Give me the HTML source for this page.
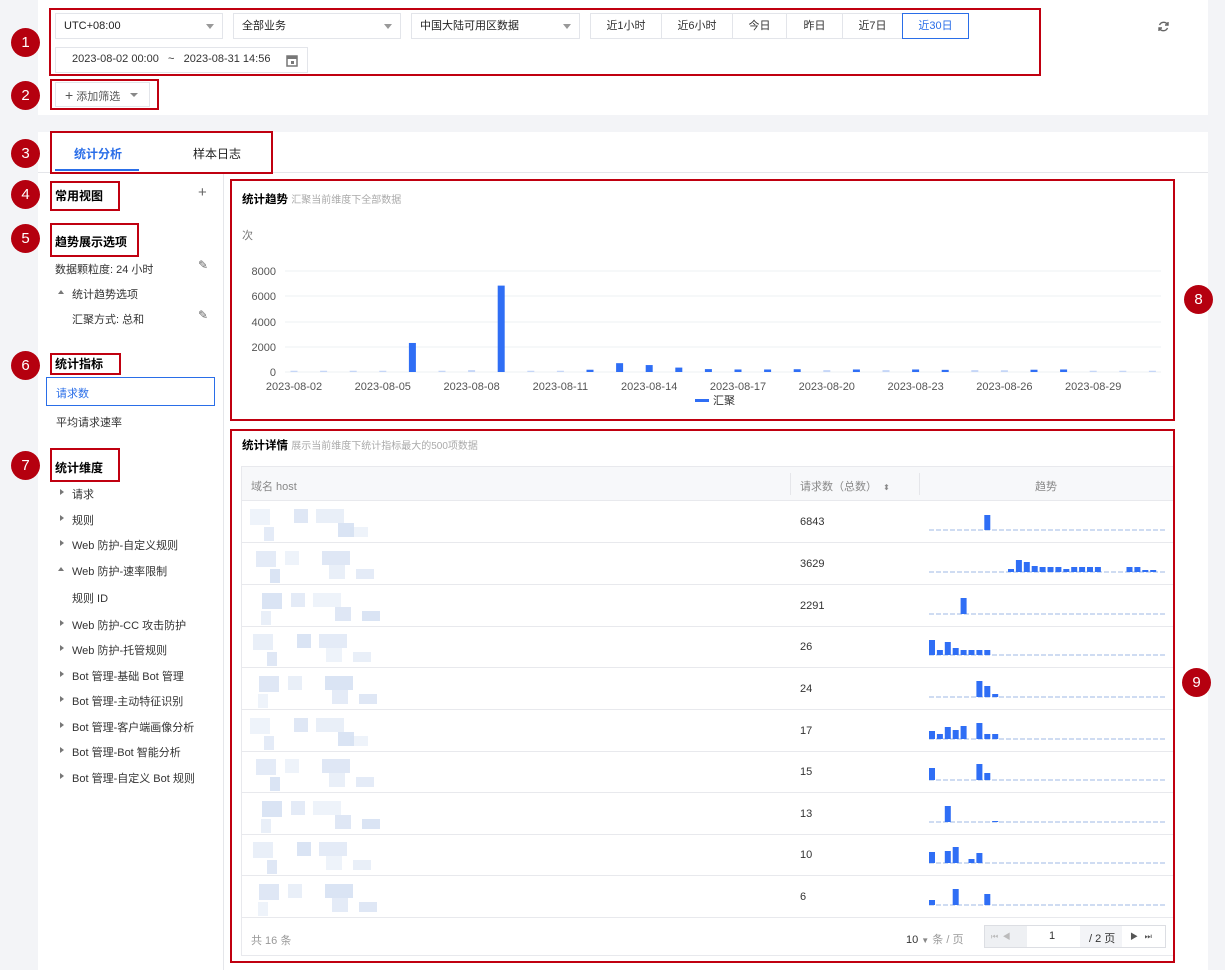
<!DOCTYPE html>
<html><head><meta charset="utf-8"><style>
*{box-sizing:border-box;margin:0;padding:0}
body{width:1225px;height:970px;background:#f3f4f7;font-family:"Liberation Sans","Noto Sans CJK SC",sans-serif;font-size:11px;color:#333;position:relative;overflow:hidden}
.a{position:absolute}
.card{position:absolute;background:#fff}
.sel{position:absolute;border:1px solid #e3e5ea;height:26px;line-height:24px;padding-left:8px;font-size:11px;color:#222}
.sel:after{content:"";position:absolute;right:8px;top:10px;border:4px solid transparent;border-top:5px solid #999}
.tb{position:absolute;top:13px;height:26px;line-height:24px;border:1px solid #e3e5ea;text-align:center;font-size:11px}
.red{position:absolute;border:2px solid #c00010}
.num{position:absolute;width:29px;height:29px;border-radius:50%;background:#b5000f;color:#fff;font-size:15px;text-align:center;line-height:29px}
.t{position:absolute;white-space:nowrap}
.b{font-weight:bold;color:#000;font-size:12px}
.tri{position:absolute;border:3px solid transparent;border-left:4px solid #777}
.row{position:absolute;left:241px;width:932px;height:42px;border-bottom:1px solid #e8e9ed}
.blur{position:absolute;background:#d5e0f2}
</style></head><body>
<div class="card" style="left:38px;top:0;width:1170px;height:115px"></div>
<div class="card" style="left:38px;top:132px;width:1170px;height:838px"></div>
<div class="a" style="left:223px;top:173px;width:1px;height:797px;background:#e5e6ea"></div>
<div class="a" style="left:38px;top:172px;width:1170px;height:1px;background:#e5e6ea"></div>

<div class="sel" style="left:55px;top:13px;width:168px">UTC+08:00</div>
<div class="sel" style="left:233px;top:13px;width:168px">全部业务</div>
<div class="sel" style="left:411px;top:13px;width:169px">中国大陆可用区数据</div>
<div class="tb" style="left:590px;width:72px">近1小时</div>
<div class="tb" style="left:661px;width:72px">近6小时</div>
<div class="tb" style="left:732px;width:55px">今日</div>
<div class="tb" style="left:786px;width:57px">昨日</div>
<div class="tb" style="left:842px;width:61px">近7日</div>
<div class="tb" style="left:902px;width:67px;border-color:#2a6ee8;color:#2a6ee8">近30日</div>
<div class="a" style="left:55px;top:47px;width:253px;height:26px;border:1px solid #e3e5ea"></div>
<div class="t" style="left:72px;top:53px">2023-08-02 00:00 &nbsp;&nbsp;~&nbsp;&nbsp; 2023-08-31 14:56</div>
<svg class="a" style="left:286px;top:54px" width="12" height="13"><rect x="1" y="2" width="10" height="10" fill="none" stroke="#777" stroke-width="1.5"/><rect x="1" y="2" width="10" height="3" fill="#777"/><rect x="5" y="7" width="3" height="3" fill="#777"/></svg>
<svg class="a" style="left:1157px;top:20px" width="13" height="13" fill="none" stroke="#666" stroke-width="1.4"><path d="M10.5 4.5A4.5 4.5 0 0 0 2.5 5M2.5 8.5A4.5 4.5 0 0 0 10.5 8"/><path d="M11 2v3H8M2 11V8h3"/></svg>
<div class="a" style="left:55px;top:82px;width:95px;height:25px;border:1px solid #e3e5ea"></div>
<div class="t" style="left:65px;top:87px;color:#555"><span style="font-size:14px">+</span> 添加筛选</div>
<div class="a" style="left:130px;top:93px;border:4px solid transparent;border-top:4px solid #888"></div>

<div class="t" style="left:74px;top:145px;font-size:12px;font-weight:bold;color:#2a6ee8">统计分析</div>
<div class="a" style="left:55px;top:169px;width:84px;height:2px;background:#2a6ee8"></div>
<div class="t" style="left:193px;top:145px;font-size:12px;color:#222">样本日志</div>

<div class="t b" style="left:55px;top:187px">常用视图</div>
<div class="t" style="left:198px;top:184px;font-size:15px;color:#666">+</div>
<div class="t b" style="left:55px;top:233px">趋势展示选项</div>
<div class="t" style="left:55px;top:261px">数据颗粒度: 24 小时</div>
<div class="t" style="left:198px;top:258px;color:#666;font-size:12px">✎</div>
<div class="a" style="left:58px;top:287px;border:3px solid transparent;border-bottom:4px solid #777"></div>
<div class="t" style="left:72px;top:286px">统计趋势选项</div>
<div class="t" style="left:72px;top:311px">汇聚方式: 总和</div>
<div class="t" style="left:198px;top:308px;color:#666;font-size:12px">✎</div>
<div class="t b" style="left:55px;top:355px">统计指标</div>
<div class="a" style="left:46px;top:377px;width:169px;height:29px;border:1px solid #2a6ee8"></div>
<div class="t" style="left:56px;top:385px;color:#2a6ee8">请求数</div>
<div class="t" style="left:56px;top:414px">平均请求速率</div>
<div class="t b" style="left:55px;top:459px">统计维度</div>
<div id="dims"></div>

<div class="a" style="left:231px;top:180px;width:943px;height:240px;background:#fff"></div>
<div class="t b" style="left:242px;top:191px;font-size:11.5px">统计趋势 <span style="font-weight:normal;color:#aaa;font-size:10px">汇聚当前维度下全部数据</span></div>
<div class="t" style="left:242px;top:227px;color:#777">次</div>
<svg class="a" style="left:231px;top:180px" width="943" height="240" id="ch"></svg>

<div class="t b" style="left:242px;top:437px;font-size:11.5px">统计详情 <span style="font-weight:normal;color:#aaa;font-size:10px">展示当前维度下统计指标最大的500项数据</span></div>
<div class="a" style="left:241px;top:466px;width:933px;height:490px;border:1px solid #e8e9ed"></div>
<div class="a" style="left:242px;top:467px;width:931px;height:34px;background:#f7f8fa;border-bottom:1px solid #e8e9ed"></div>
<div class="t" style="left:251px;top:478px;color:#888">域名 host</div>
<div class="t" style="left:800px;top:478px;color:#888">请求数（总数） &nbsp;<span style="font-size:8px">⬍</span></div>
<div class="t" style="left:1035px;top:478px;color:#888">趋势</div>
<div class="a" style="left:790px;top:473px;width:1px;height:22px;background:#e5e6ea"></div>
<div class="a" style="left:919px;top:473px;width:1px;height:22px;background:#e5e6ea"></div>
<div id="rows"></div>
<div class="t" style="left:251px;top:932px;color:#999">共 16 条</div>
<div class="t" style="left:906px;top:931px">10 <span style="font-size:8px;color:#888">▼</span> <span style="color:#999">条 / 页</span></div>
<div class="a" style="left:984px;top:925px;width:182px;height:23px;border:1px solid #dcdee3;background:#fff"></div>
<div class="a" style="left:985px;top:926px;width:42px;height:21px;background:#eef0f3"></div>
<div class="a" style="left:1080px;top:926px;width:42px;height:21px;background:#f3f4f7"></div>
<div class="t" style="left:991px;top:931px;color:#bbb;font-size:8px">⏮ &nbsp;◀</div>
<div class="t" style="left:1049px;top:930px">1</div>
<div class="t" style="left:1089px;top:930px">/ 2 页</div>
<div class="t" style="left:1130px;top:931px;color:#555;font-size:8px">▶ &nbsp; ⏭</div>

<div class="red" style="left:49px;top:8px;width:992px;height:68px"></div>
<div class="red" style="left:50px;top:79px;width:109px;height:31px"></div>
<div class="red" style="left:50px;top:131px;width:223px;height:43px"></div>
<div class="red" style="left:50px;top:181px;width:70px;height:30px"></div>
<div class="red" style="left:50px;top:223px;width:89px;height:34px"></div>
<div class="red" style="left:50px;top:353px;width:71px;height:22px"></div>
<div class="red" style="left:50px;top:448px;width:70px;height:34px"></div>
<div class="red" style="left:230px;top:179px;width:945px;height:242px"></div>
<div class="red" style="left:230px;top:429px;width:945px;height:534px"></div>
<div class="num" style="left:11px;top:28px">1</div>
<div class="num" style="left:11px;top:81px">2</div>
<div class="num" style="left:11px;top:139px">3</div>
<div class="num" style="left:11px;top:180px">4</div>
<div class="num" style="left:11px;top:224px">5</div>
<div class="num" style="left:11px;top:351px">6</div>
<div class="num" style="left:11px;top:451px">7</div>
<div class="num" style="left:1184px;top:285px">8</div>
<div class="num" style="left:1182px;top:668px">9</div>

<script>
var d=[["请求",492,0],["规则",518,0],["Web 防护-自定义规则",543,0],["Web 防护-速率限制",569,1],["规则 ID",596,2],["Web 防护-CC 攻击防护",623,0],["Web 防护-托管规则",648,0],["Bot 管理-基础 Bot 管理",674,0],["Bot 管理-主动特征识别",699,0],["Bot 管理-客户端画像分析",725,0],["Bot 管理-Bot 智能分析",750,0],["Bot 管理-自定义 Bot 规则",776,0]];
var h="";d.forEach(function(x){h+='<div class="t" style="left:72px;top:'+(x[1]-6)+'px">'+x[0]+'</div>';
if(x[2]==0)h+='<div class="tri" style="left:60px;top:'+(x[1]-3)+'px"></div>';
if(x[2]==1)h+='<div class="a" style="left:58px;top:'+(x[1]-5)+'px;border:3px solid transparent;border-bottom:4px solid #777"></div>';});
document.getElementById("dims").innerHTML=h;
var s="";var grid=[[271,"8000"],[296,"6000"],[322,"4000"],[347,"2000"],[372,"0"]];
grid.forEach(function(g){var y=g[0]-180;s+='<line x1="54" x2="930" y1="'+y+'" y2="'+y+'" stroke="#eef0f3"/><text x="45" y="'+(y+4)+'" text-anchor="end" font-size="11" fill="#555" font-family="Liberation Sans">'+g[1]+'</text>';});
var v=[100,100,100,100,2300,100,150,6843,100,100,180,700,550,350,230,200,200,220,150,200,150,200,170,150,140,180,200,100,100,100];
v.forEach(function(x,i){var cx=63+i*29.6;var hh=x*101/8000;s+='<rect x="'+(cx-3.5)+'" y="'+(192-hh)+'" width="7" height="'+hh+'" fill="'+(x>150?"#2f6ef5":"#c5d6f7")+'"/>';});
["2023-08-02","2023-08-05","2023-08-08","2023-08-11","2023-08-14","2023-08-17","2023-08-20","2023-08-23","2023-08-26","2023-08-29"].forEach(function(t,i){s+='<text x="'+(63+i*88.8)+'" y="210" text-anchor="middle" font-size="11" fill="#555" font-family="Liberation Sans">'+t+'</text>';});
s+='<rect x="464" y="219" width="14" height="3" fill="#2f6ef5"/><text x="482" y="224" font-size="11" fill="#333" font-family="Liberation Sans,Noto Sans CJK SC">汇聚</text>';
document.getElementById("ch").innerHTML=s;
var tops=[501,543,585,626,668,710,751,793,834,876];var nums=[6843,3629,2291,26,24,17,15,13,10,6];
var sp=[{7:15},{10:3,11:12,12:10,13:6,14:5,15:5,16:5,17:3,18:5,19:5,20:5,21:5,25:5,26:5,27:2,28:2},{4:16},{0:15,1:5,2:13,3:7,4:5,5:5,6:5,7:5},{6:16,7:11,8:3},{0:8,1:5,2:12,3:9,4:13,6:16,7:5,8:5},{0:12,6:16,7:7},{2:16,8:1},{0:11,2:12,3:16,5:4,6:10},{0:5,3:16,7:11}];
var r="";tops.forEach(function(t,i){r+='<div class="row" style="top:'+t+'px"></div><div class="t" style="left:800px;top:'+(t+15)+'px">'+nums[i]+'</div>';
var bx=[[250,10,20,16],[285,10,14,14],[313,10,28,14],[326,24,16,14],[258,28,10,14],[350,28,18,10]];
bx.forEach(function(b,k){var o=(i*7+k*3)%5;r+='<div class="blur" style="left:'+(b[0]+o*3)+'px;top:'+(t+b[1]-2)+'px;width:'+b[2]+'px;height:'+b[3]+'px;opacity:'+(0.4+o*0.12)+'"></div>';});
var g='<svg class="a" style="left:929px;top:'+(t+8)+'px" width="236" height="24"><line x1="0" x2="236" y1="21" y2="21" stroke="#9fb8e6" stroke-dasharray="5,2"/>';
for(var k in sp[i]){var hh=sp[i][k];g+='<rect x="'+(k*7.9)+'" y="'+(21-hh)+'" width="6" height="'+hh+'" fill="#2f6ef5"/>';}
r+=g+'</svg>';});
document.getElementById("rows").innerHTML=r;
</script>
</body></html>
